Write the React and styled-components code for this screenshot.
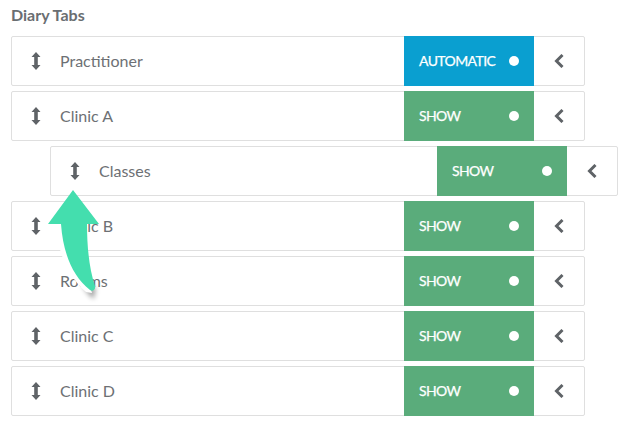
import React from 'react';
import styled, {createGlobalStyle} from 'styled-components';

const GlobalStyle = createGlobalStyle`
  html, body {
    margin: 0;
    background: #fff;
  }
  body {
    font-family: Lato, "Open Sans", sans-serif;
    color: #5f6367;
  }
`;

const Page = styled.div`
  position: relative;
  width: 626px;
  height: 439px;
  padding: 5px 0 0 11px;
  box-sizing: border-box;
  overflow: hidden;
`;

const Title = styled.h2`
  margin: 0 0 12px;
  font-size: 16px;
  line-height: 19px;
  font-weight: 700;
  color: #6a6e72;
`;

const List = styled.div`
  display: flex;
  flex-direction: column;
  gap: 5px;
`;

const Row = styled.div`
  display: flex;
  align-items: stretch;
  box-sizing: border-box;
  height: 50px;
  width: ${props => (props.$dragged ? '568px' : '574px')};
  margin-left: ${props => (props.$dragged ? '39px' : '0')};
  border: 1px solid #dfdfdf;
  border-radius: 2px;
  background: #fff;
`;

const Handle = styled.div`
  display: flex;
  align-items: center;
  justify-content: center;
  width: 48px;
  flex: none;
  color: #5f6367;
`;

const Name = styled.div`
  flex: 1;
  display: flex;
  align-items: center;
  padding-bottom: 2px;
  font-size: 16px;
  color: #6d7074;
`;

const Status = styled.div`
  display: flex;
  align-items: center;
  justify-content: space-between;
  box-sizing: border-box;
  width: 130px;
  margin: -1px 0;
  padding: 0 15px;
  background: ${props => (props.$auto ? '#0a9fd0' : '#5aac7b')};
  color: #fff;
`;

const StatusLabel = styled.span`
  margin-bottom: 2px;
  font-size: 14px;
  font-weight: 400;
  letter-spacing: -0.6px;
  -webkit-text-stroke: 0.25px #fff;
`;

const Dot = styled.span`
  width: 10px;
  height: 10px;
  border-radius: 50%;
  background: #fff;
`;

const Toggle = styled.div`
  display: flex;
  align-items: center;
  justify-content: center;
  width: 50px;
  flex: none;
  color: #5f6367;
`;

const Arrow = styled.svg`
  position: absolute;
  left: 40px;
  top: 180px;
`;

const MoveIcon = () => (
  <svg width="10" height="18" viewBox="0 0 10 18" fill="currentColor">
    <path d="M5 0 L9.5 5 H6.8 V13 H9.5 L5 18 L0.5 13 H3.2 V5 H0.5 Z" />
  </svg>
);

const ChevronIcon = () => (
  <svg width="10" height="14" viewBox="0 0 10 14" fill="none" stroke="currentColor" strokeWidth="3">
    <path d="M8.5 1 L2.5 7 L8.5 13" />
  </svg>
);

const tabs = [
  {name: 'Practitioner', status: 'AUTOMATIC', auto: true},
  {name: 'Clinic A', status: 'SHOW'},
  {name: 'Classes', status: 'SHOW', dragged: true},
  {name: 'Clinic B', status: 'SHOW'},
  {name: 'Rooms', status: 'SHOW'},
  {name: 'Clinic C', status: 'SHOW'},
  {name: 'Clinic D', status: 'SHOW'}
];

export default function App() {
  return (
    <Page>
      <GlobalStyle />
      <Title>Diary Tabs</Title>
      <List>
        {tabs.map(tab => (
          <Row key={tab.name} $dragged={tab.dragged}>
            <Handle>
              <MoveIcon />
            </Handle>
            <Name>{tab.name}</Name>
            <Status $auto={tab.auto}>
              <StatusLabel>{tab.status}</StatusLabel>
              <Dot />
            </Status>
            <Toggle>
              <ChevronIcon />
            </Toggle>
          </Row>
        ))}
      </List>
      <Arrow width="70" height="130" viewBox="0 0 70 130">
        <defs>
          <filter id="arrow-shadow" x="-80%" y="-60%" width="260%" height="220%">
            <feGaussianBlur stdDeviation="2.5" />
          </filter>
        </defs>
        {/* soft shadow below the tail, white edge on the left of the shaft */}
        <path d="M42 104 C46 112 50 117 54 119 L56 108 Z" fill="#000" opacity="0.35" filter="url(#arrow-shadow)" />
        <path d="M16 44 L30 44 L52 113 L46 112 C27 96 17 70 16 44 Z" fill="#fff" />
        <path d="M8 44 L33 10 L59 44 L47 44 C47 66 49 88 55 106 C56 110 52 112 50 110 C32 96 23 72 21 44 Z" fill="#44deae" />
      </Arrow>
    </Page>
  );
}
